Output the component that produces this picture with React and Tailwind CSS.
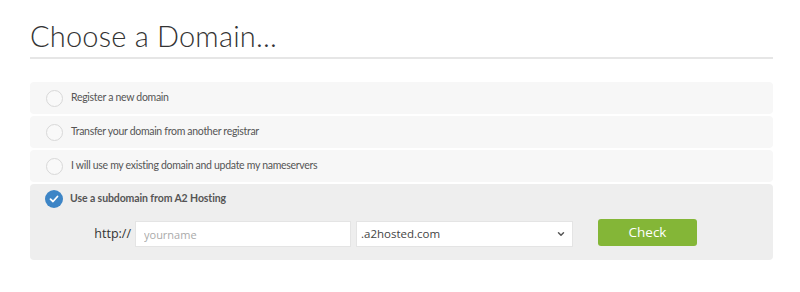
import { ChevronDown } from 'lucide-react';

const options = [
  'Register a new domain',
  'Transfer your domain from another registrar',
  'I will use my existing domain and update my nameservers',
];

function Radio() {
  return <span className="w-[17px] h-[17px] rounded-full border border-[#d8d8d8] bg-[#f9f9f9] shrink-0" />;
}

function CheckedRadio() {
  return (
    <span className="w-[18px] h-[18px] rounded-full bg-[#3d85c6] shrink-0 flex items-center justify-center">
      <svg width="10" height="8" viewBox="0 0 10 8" fill="none">
        <path d="M1.5 4.2 L4 6.5 L8.5 1.5" stroke="white" strokeWidth="1.8" strokeLinecap="round" strokeLinejoin="round" />
      </svg>
    </span>
  );
}

export default function App() {
  return (
    <div className="w-[800px] h-[292px] bg-white pl-[30px] pr-[27px] font-['Open_Sans',sans-serif]">
      {/* Heading */}
      <h1 className="pt-[22px] pb-[7px] border-b-2 border-[#e6e6e6] text-[29px] leading-[28px] font-light text-[#333] font-['Lato',sans-serif] tracking-[0.2px]">
        Choose a Domain...
      </h1>

      {/* Options */}
      <div className="mt-[23px] flex flex-col gap-[2px] font-['Lato',sans-serif]">
        {options.map((label) => (
          <div key={label} className="h-[32px] bg-[#f7f7f7] rounded-[4px] flex items-center pl-[16px] gap-[8px]">
            <Radio />
            <span className="text-[10.5px] tracking-[-0.3px] text-[#555]">{label}</span>
          </div>
        ))}

        <div className="bg-[#eeeeee] rounded-[4px] pt-[6px] pb-[13px]">
          <div className="flex items-center pl-[15px] gap-[7px] h-[18px]">
            <CheckedRadio />
            <span className="text-[10.5px] tracking-[-0.1px] font-bold text-[#555]">Use a subdomain from A2 Hosting</span>
          </div>
          <div className="mt-[13px] flex items-center font-['Open_Sans',sans-serif]">
            <span className="w-[105px] text-right pr-[4px] text-[12.5px] text-[#333]">http://</span>
            <input
              placeholder="yourname"
              className="w-[216px] h-[26px] bg-white border border-[#e4e4e4] px-[8px] text-[11px] text-[#555] placeholder:text-[#aaa] outline-none"
            />
            <div className="ml-[5px] w-[217px] h-[26px] bg-white border border-[#e4e4e4] flex items-center justify-between pl-[4px] pr-[6px]">
              <span className="text-[11.5px] text-[#444]">.a2hosted.com</span>
              <ChevronDown size={10} strokeWidth={3.5} className="text-[#555]" />
            </div>
            <button className="ml-[25px] w-[99px] h-[27px] -mt-[4px] bg-[#84b637] rounded-[3px] text-white text-[13.5px]">
              Check
            </button>
          </div>
        </div>
      </div>
    </div>
  );
}
